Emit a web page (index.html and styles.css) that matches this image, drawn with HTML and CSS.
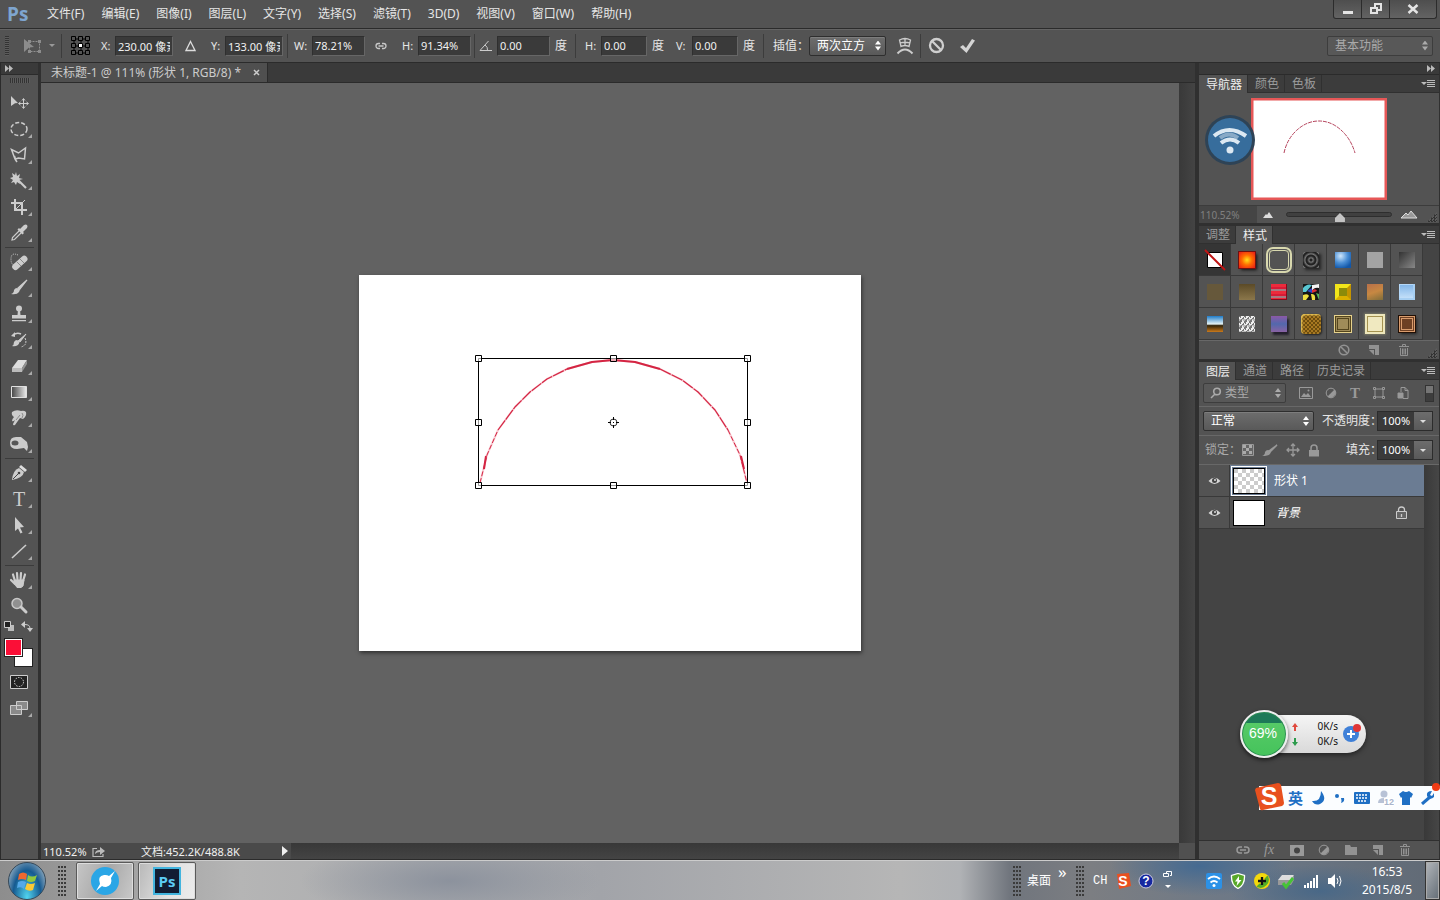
FILE: index.html
```html
<!DOCTYPE html>
<html lang="zh-CN">
<head>
    <meta charset="UTF-8">
    <meta name="viewport" content="width=device-width, initial-scale=1.0">
    <title>未标题-1 @ 111%</title>
    <link rel="stylesheet" href="styles.css">
</head>
<body>
    <!-- Menu bar -->
    <header class="menubar">
        <span class="ps-logo">Ps</span>
        <nav class="menus">
            <a href="#">文件(F)</a>
            <a href="#">编辑(E)</a>
            <a href="#">图像(I)</a>
            <a href="#">图层(L)</a>
            <a href="#">文字(Y)</a>
            <a href="#">选择(S)</a>
            <a href="#">滤镜(T)</a>
            <a href="#">3D(D)</a>
            <a href="#">视图(V)</a>
            <a href="#">窗口(W)</a>
            <a href="#">帮助(H)</a>
        </nav>
        <div class="window-buttons">
            <button type="button" aria-label="最小化"><svg width="12" height="12"><path d="M1 8h10v3H1z" fill="#e4e4e4"/></svg></button>
            <button type="button" aria-label="还原"><svg width="12" height="12" fill="none" stroke="#e4e4e4" stroke-width="2"><path d="M5 4V1h6v6H8"/><path d="M1 5h6v5H1z"/></svg></button>
            <button type="button" class="close" aria-label="关闭"><svg width="12" height="12"><path d="M1.500 2l9 8M10.500 2l-9 8" stroke="#e4e4e4" stroke-width="2.500"/></svg></button>
        </div>
    </header>

    <!-- Tool options -->
    <form class="options">
        <span class="grip"></span>
        <svg class="tool-now" width="18" height="16"><path d="M6.500 3.500h10v10h-10z" fill="none" stroke="#909090" stroke-dasharray="2 1"/><path d="M1 1l10 8-5 .5L1 14z" fill="#8c8c8c"/><path d="M5 2h3v3H5zM15 2h3v3h-3zM15 12h3v3h-3zM5 12h3v3H5z" fill="#8c8c8c"/></svg>
        <span class="caret"></span>
        <span class="sep"></span>
        <svg class="ref-point" width="20" height="20" fill="none" stroke="#000"><path d="M3 3h14v14H3zM3 10h14M10 3v14"/><g fill="#535353"><path d="M.5.5h4v4h-4zM7.500.5h4v4h-4zM14.500.5h4v4h-4zM.5 7.500h4v4h-4zM14.500 7.500h4v4h-4zM.5 14.500h4v4h-4zM7.500 14.500h4v4h-4zM14.500 14.500h4v4h-4z"/></g><path d="M7.500 7.500h4v4h-4z" fill="#fff"/></svg>
        <label class="l14" for="x">X:</label><input id="x" class="w58" type="text" value="230.00 像素">
        <svg class="delta" width="11" height="12"><path d="M5.500 1.500l4.500 9H1z" fill="none" stroke="#ddd" stroke-width="1.300"/></svg>
        <label class="l14" for="y">Y:</label><input id="y" class="w58" type="text" value="133.00 像素">
        <span class="sep near"></span>
        <label class="l18" for="w">W:</label><input id="w" class="w53" type="text" value="78.21%">
        <svg class="link-wh" width="12" height="8" fill="none" stroke="#c8c8c8" stroke-width="1.300"><path d="M5 1.500H3.500a2.500 2.500 0 0 0 0 5H5M7 1.500h1.500a2.500 2.500 0 0 1 0 5H7M3.500 4h5"/></svg>
        <label class="l16" for="h">H:</label><input id="h" class="w53" type="text" value="91.34%">
        <span class="sep tight"></span>
        <svg class="angle" width="13" height="12" fill="none" stroke="#ccc"><path d="M9.500 1L1 10.500h12M6 5q3 2 2.500 5.500"/></svg>
        <input class="w53" type="text" value="0.00" aria-label="旋转"><span class="unit">度</span>
        <span class="sep wide"></span>
        <label class="l16" for="sh">H:</label><input id="sh" class="w46" type="text" value="0.00"><span class="unit">度</span>
        <label class="l16 skew-v" for="sv">V:</label><input id="sv" class="w46" type="text" value="0.00"><span class="unit">度</span>
        <span class="sep wide"></span>
        <label class="l36" for="interp">插值：</label>
        <span class="select interp"><select id="interp"><option>两次立方</option></select></span>
        <button type="button" class="flat warp" aria-label="变形"><svg width="18" height="18" fill="none" stroke="#ccc" stroke-width="1.300"><path d="M3.500 3q5.500-3 11 0l-1.500 6.500q-4-2-8 0zM4 6q5-1.500 10 0M9 1.500v7.500"/><path d="M1.500 16.500q7.500-8 15 0" stroke-width="2"/></svg></button>
        <span class="sep"></span>
        <button type="button" class="flat cancel" aria-label="取消变换"><svg width="17" height="17" fill="none" stroke="#cfcfcf" stroke-width="2.300"><circle cx="8.500" cy="8.500" r="6.500"/><path d="M4 4l9 9"/></svg></button>
        <button type="button" class="flat commit" aria-label="提交变换"><svg width="17" height="16"><path d="M1 9l3-2 3 3 6-9 3 1.500L7.500 15z" fill="#d4d4d4"/></svg></button>
        <span class="select workspace-pick dim"><select aria-label="工作区"><option>基本功能</option></select></span>
    </form>

    <main class="workspace">
        <!-- Toolbox -->
        <aside class="toolbox">
            <div class="bar-head"><svg width="8" height="7" fill="#bbb"><path d="M0 0l4 3.500L0 7zM4 0l4 3.500L4 7z"/></svg></div>
            <div class="toolbox-grip"></div>
            <div class="tools">
                <button type="button" class="single" aria-label="移动"><svg viewBox="0 0 20 20"><path d="M2 3l7 7-3 .3L2 13z" fill="#ccc"/><path d="M14.500 6v9M10 10.500h9M13 7.500l1.500-2 1.500 2M13 13.500l1.500 2 1.500-2M11.500 9l-2 1.500 2 1.500M17.500 9l2 1.500-2 1.500" fill="none" stroke="#ccc"/></svg></button>
                <button type="button" aria-label="椭圆选框"><svg viewBox="0 0 20 20"><ellipse cx="10" cy="10" rx="8" ry="6.500" fill="none" stroke="#ccc" stroke-width="1.500" stroke-dasharray="4 2"/></svg></button>
                <button type="button" aria-label="套索"><svg viewBox="0 0 20 20" fill="none" stroke="#ccc" stroke-width="1.500"><path d="M6 14L2.500 4.500l7 3.500 7-5-1 11-6-1-3 1-1-3M6 14l2 3"/></svg></button>
                <button type="button" aria-label="魔棒"><svg viewBox="0 0 20 20"><path d="M7 1l1 4 3-2-1 4 4 1-4 1 1 4-3-2-1 3-2-3-3 1 2-3-3-2 3-1-1-4 3 2z" fill="#ccc"/><path d="M9 9l8 8" stroke="#ccc" stroke-width="2.200"/></svg></button>
                <button type="button" aria-label="裁剪"><svg viewBox="0 0 20 20" fill="none" stroke="#ccc" stroke-width="2"><path d="M6 2v11h12M2 6h11v12"/><path d="M7 12l9-9" stroke-width="1"/></svg></button>
                <button type="button" aria-label="吸管"><svg viewBox="0 0 20 20"><path d="M11 6l4-4q2-1 3 0t0 3l-4 4 1 1-1.500 1.500-5-5L10 5z" fill="#ccc"/><path d="M10.500 7.500l-7 7L3 17l2.500-.5 7-7" fill="none" stroke="#ccc" stroke-width="1.200"/></svg></button>
                <hr>
                <button type="button" aria-label="修复画笔"><svg viewBox="0 0 20 20"><rect x="2" y="7.500" width="18" height="6.500" rx="3" transform="rotate(-42 11 11)" fill="#ccc"/><path d="M8 10l4 4M11 7l4 4" stroke="#888"/><path d="M9 3q-7-3-7 4t4 5" fill="none" stroke="#ccc" stroke-dasharray="1 1"/></svg></button>
                <button type="button" aria-label="画笔"><svg viewBox="0 0 20 20"><path d="M18 2l-7.500 9.500L9 10z" stroke="#ccc" fill="#ccc" stroke-width="1.200"/><path d="M8 10q4 1 2 4-2 3-8 2 3-1 3-4 1-2 3-2z" fill="#ccc"/></svg></button>
                <button type="button" aria-label="图章"><svg viewBox="0 0 20 20" fill="#ccc"><circle cx="10" cy="4.500" r="3"/><path d="M9 6h2l.5 5H17v3.500H3V11h5.500zM3 16h14v1.300H3z"/></svg></button>
                <button type="button" aria-label="历史记录画笔"><svg viewBox="0 0 20 20"><path d="M17 4l-6 8-2-1z" fill="#ccc" stroke="#ccc"/><path d="M8 10q4 2 1 5-3 2-6 1 2-1 2-4 1-2 3-2z" fill="#ccc"/><path d="M4 5q4-3 8-1" fill="none" stroke="#ccc" stroke-width="1.500"/><path d="M2 6l4-4v5z" fill="#ccc"/><path d="M16 8q3 7-4 9" fill="none" stroke="#ccc" stroke-dasharray="2 1"/></svg></button>
                <button type="button" aria-label="橡皮擦"><svg viewBox="0 0 20 20"><path d="M9 4h9l-5 8H3z" fill="#ddd"/><path d="M3 12h10v4H3z" fill="#bbb"/><path d="M18 4v4l-5 8v-4z" fill="#929292"/></svg></button>
                <button type="button" aria-label="渐变"><svg viewBox="0 0 20 20"><defs><linearGradient id="g1"><stop stop-color="#444"/><stop offset="1" stop-color="#eee"/></linearGradient></defs><path d="M2.500 4.500h15v11h-15z" fill="url(#g1)" stroke="#e0e0e0"/></svg></button>
                <button type="button" aria-label="涂抹"><svg viewBox="0 0 20 20"><path d="M3 4q4-3 9-1 3-1 5 1 1 4-3 7l-3-1-5 7q-2 1-2-1l2-4q-2 2-3 1 0-2 2-4-3-2-2-5z" fill="#ccc"/><path d="M7 12l4-5M13 5q2 2 0 5" fill="none" stroke="#8a8a8a"/></svg></button>
                <button type="button" aria-label="海绵"><svg viewBox="0 0 20 20"><path d="M1 9q0-6 6-6h5l6 5 1 5-1 4-3-3-7 1q-7 0-7-6z" fill="#ccc"/><ellipse cx="6" cy="9" rx="3.500" ry="2.500" fill="#575757"/></svg></button>
                <hr>
                <button type="button" aria-label="钢笔"><svg viewBox="0 0 20 20"><path d="M12 2l6 5-2 2-6-5z" fill="#ddd"/><path d="M10 5l5 4q-1 6-12 8Q4 7 10 5z" fill="#ccc"/><path d="M4 16l6-6" stroke="#444"/><circle cx="10" cy="10" r="1.300" fill="#444"/></svg></button>
                <button type="button" aria-label="文字"><span class="t-icon">T</span></button>
                <button type="button" aria-label="路径选择"><svg viewBox="0 0 20 20"><path d="M6 2l9 10-4 .5 2.500 5-2 1L9 13.500 6 16z" fill="#ccc"/></svg></button>
                <button type="button" aria-label="直线"><svg viewBox="0 0 20 20"><path d="M3 17L17 4" stroke="#ccc" stroke-width="1.600"/></svg></button>
                <hr>
                <button type="button" aria-label="抓手"><svg viewBox="0 0 20 20" fill="none" stroke="#ccc" stroke-width="2.200" stroke-linecap="round"><path d="M6 11L4 4.500M8.500 10L8 3M11.500 10l.5-7M14 11l2-6.500M6 14l-4-4"/><path d="M5.500 10H15l-1 6-2 1.500H8L5 13z" fill="#ccc" stroke-width="1"/></svg></button>
                <button type="button" class="single" aria-label="缩放"><svg viewBox="0 0 20 20"><circle cx="8" cy="7.500" r="5" fill="#909090" stroke="#c8c8c8" stroke-width="1.500"/><path d="M12 11l5 5" stroke="#ccc" stroke-width="3" stroke-linecap="round"/></svg></button>
            </div>
            <div class="mini-swatch">
                <svg width="11" height="11"><path d="M4 4h6v6H4z" fill="#bbb"/><path d="M.5.500h6v6h-6z" fill="#222" stroke="#ccc"/></svg>
                <svg width="12" height="12" fill="#ccc"><path d="M4 0v7L0 3.500z"/><path d="M4 3.500q5 0 5 4" fill="none" stroke="#ccc"/><path d="M6 7h6l-3 4z"/></svg>
            </div>
            <div class="colors"><span class="bg-color"></span><span class="fg-color"></span></div>
            <button type="button" class="mode" aria-label="快速蒙版"><svg width="18" height="14"><path d="M.5.500h17v13H.5z" fill="#222" stroke="#ccc"/><circle cx="9" cy="7" r="4.500" fill="none" stroke="#ddd" stroke-dasharray="1.500 1.300"/></svg></button>
            <button type="button" class="mode screen" aria-label="屏幕模式"><svg width="18" height="14" fill="#8a8a8a" stroke="#ccc"><path d="M.5 4.500h11v9H.5zM6.500.500h11v8h-11z"/></svg></button>
        </aside>

        <!-- Document -->
        <section class="document">
            <div class="doc-tabs"><div class="doc-tab">未标题-1 @ 111% (形状 1, RGB/8) *<button type="button" aria-label="关闭文档"><svg width="8" height="8"><path d="M1 1l5 5M6 1L1 6" stroke="#ccc" stroke-width="1.500"/></svg></button></div></div>
            <div class="stage-row">
                <div class="stage">
                    <svg class="artboard" width="502" height="376" viewBox="0 0 502 376">
                        <g fill="none" stroke="#d42543" stroke-linejoin="round">
                            <path d="M121 208L128 180L139 155L156 132L171 117L188 104L208 94L233 87L254 85L276 87L301 94L323 105L339 117L356 135L369 155L381 180L388 208" stroke="#f4a0ae" stroke-width="2" stroke-opacity=".5"/>
                            <path d="M121 208L128 180L139 155M369 155L381 180L388 208" stroke-width="1" stroke-dasharray="5 2"/>
                            <path d="M139 155L156 132L171 117L188 104L208 94M301 94L323 105L339 117L356 135L369 155" stroke-width="1.200" stroke-dasharray="12 1"/>
                            <path d="M208 94L233 87L254 85L276 87L301 94" stroke-width="2"/>
                            <path d="M127 181L125 194M382 181L385 194" stroke-width="2"/>
                        </g>
                        <path d="M119.500 83.500h269v127h-269z" fill="none" stroke="#000"/>
                        <g fill="#fff" fill-opacity=".6" stroke="#000">
                            <path d="M116.500 80.500h6v6h-6zM251.500 80.500h6v6h-6zM385.500 80.500h6v6h-6zM116.500 144.500h6v6h-6zM385.500 144.500h6v6h-6zM116.500 207.500h6v6h-6zM251.500 207.500h6v6h-6zM385.500 207.500h6v6h-6z"/>
                        </g>
                        <circle cx="254.500" cy="147.500" r="3.500" fill="none" stroke="#333"/>
                        <path d="M254.500 142v3M254.500 150v3M249 147.500h3M257 147.500h3M254 147.500h1" stroke="#000"/>
                    </svg>
                </div>
                <div class="v-scroll"></div>
            </div>
            <footer class="status">
                <div class="status-main">
                    <span class="zoom">110.52%</span>
                    <svg width="13" height="11" fill="none" stroke="#bbb" stroke-width="1.200"><path d="M5 2.500H1v8h10V8"/><path d="M3 8q0-4 5-4V1l5 4-5 4V6Q5 6 3 8" fill="#bbb" stroke="none"/></svg>
                    <span class="doc-size">文档:452.2K/488.8K</span>
                    <span class="play"></span>
                </div>
                <div class="corner"></div>
            </footer>
        </section>

        <!-- Panels -->
        <aside class="dock">
            <div class="bar-head right"><svg width="8" height="7" fill="#bbb"><path d="M0 0l4 3.500L0 7zM4 0l4 3.500L4 7z"/></svg></div>
            <section class="panel">
                <div class="tabs"><button type="button" class="on">导航器</button><button type="button">颜色</button><button type="button">色板</button><i class="panel-menu"></i></div>
                <div class="nav-body">
                    <svg class="nav-thumb" width="136" height="102"><path d="M1 1h134v100H1z" fill="#fff" stroke="#e65757" stroke-width="3"/><path d="M33 55q3-14 13-23t22-9 22 9 14 23" fill="none" stroke="#b5435c" stroke-dasharray="4 1"/></svg>
                    <div class="wifi-badge"><svg width="36" height="30" fill="none" stroke="#dce8f2" stroke-width="4"><path d="M2 11q15-12 32 0M9 18q9-7 18 0"/><path d="M8 13q9-7 18 0" stroke-opacity=".5"/><circle cx="18" cy="25" r="3.500" fill="#dce8f2" stroke="none"/></svg></div>
                </div>
                <div class="nav-foot">
                    <input class="nav-zoom" type="text" value="110.52%" aria-label="缩放比例">
                    <svg width="10" height="6"><path d="M0 6l3-4 1 1 2-3 4 6z" fill="#ddd"/></svg>
                    <input class="nav-range" type="range" min="0" max="100" value="51" aria-label="缩放">
                    <svg width="18" height="9"><path d="M1 8l5-5 2 2 3-4 6 7z" fill="#999" stroke="#ddd"/></svg>
                    <i class="sizer"></i>
                </div>
            </section>

            <section class="panel">
                <div class="tabs"><button type="button">调整</button><button type="button" class="on">样式</button><i class="panel-menu"></i></div>
                <div class="styles-grid">
                    <button type="button" class="picked" aria-label="无样式"><svg width="22" height="22"><path d="M3.500 3.500h15v15h-15z" fill="#fff" stroke="#000"/><path d="M1 1l20 20" stroke="#c01414" stroke-width="2"/></svg></button>
                    <button type="button" aria-label="样式 2"><i class="sw sun"></i></button>
                    <button type="button" aria-label="样式 3"><i class="sw ring"></i></button>
                    <button type="button" aria-label="样式 4"><i class="sw target"></i></button>
                    <button type="button" aria-label="样式 5"><i class="sw blue-glass"></i></button>
                    <button type="button" aria-label="样式 6"><i class="sw grey"></i></button>
                    <button type="button" aria-label="样式 7"><i class="sw smoke"></i></button>
                    <button type="button" aria-label="样式 8"><i class="sw brown"></i></button>
                    <button type="button" aria-label="样式 9"><i class="sw olive"></i></button>
                    <button type="button" aria-label="样式 10"><i class="sw plaid"></i></button>
                    <button type="button" aria-label="样式 11"><svg width="16" height="16"><path d="M0 0h16v16H0z" fill="#151515"/><path d="M0 4q4-5 9-3L3 8H0z" fill="#58c7d3"/><path d="M9 1l7-1v4q-5-1-7 3z" fill="#f4f4f4"/><path d="M4 7l5-3v5z" fill="#2e48c8"/><path d="M9 6q4-2 5 1l-5 2z" fill="#df3039"/><path d="M0 16v-5q5-2 6 1l-3 4zM8 10q5-1 4 6H9z" fill="#f0e040"/><path d="M13 9l3 1v6z" fill="#59b45a"/></svg></button>
                    <button type="button" aria-label="样式 12"><i class="sw yellow"></i></button>
                    <button type="button" aria-label="样式 13"><i class="sw sunset"></i></button>
                    <button type="button" aria-label="样式 14"><i class="sw ice"></i></button>
                    <button type="button" aria-label="样式 15"><i class="sw desert"></i></button>
                    <button type="button" aria-label="样式 16"><i class="sw noise"></i></button>
                    <button type="button" aria-label="样式 17"><i class="sw violet"></i></button>
                    <button type="button" aria-label="样式 18"><i class="sw gold"></i></button>
                    <button type="button" aria-label="样式 19"><i class="sw frame"></i></button>
                    <button type="button" aria-label="样式 20"><i class="sw cream"></i></button>
                    <button type="button" aria-label="样式 21"><i class="sw copper"></i></button>
                </div>
                <div class="styles-foot">
                    <svg width="12" height="12" fill="none" stroke="#929292" stroke-width="1.600"><circle cx="6" cy="6" r="4.800"/><path d="M3 3l6 6"/></svg>
                    <svg width="12" height="12" fill="#929292"><path d="M1 1h10v10H7V5H1z"/><path d="M1 6h5v5z"/></svg>
                    <svg width="12" height="12" fill="none" stroke="#929292"><path d="M1 2.500h10M4.500 2V.5h3V2M2.500 4v7.500h7V4M4.500 4.500v6M6 4.500v6M7.500 4.500v6"/></svg>
                    <i class="sizer"></i>
                </div>
            </section>

            <section class="panel layers">
                <div class="tabs"><button type="button" class="on">图层</button><button type="button">通道</button><button type="button">路径</button><button type="button">历史记录</button><i class="panel-menu"></i></div>
                <div class="filter-row">
                    <span class="select filter dim"><svg width="12" height="12" fill="none" stroke="#aaa" stroke-width="1.600"><circle cx="7" cy="4.500" r="3.300"/><path d="M5 7l-4 4"/></svg><select aria-label="筛选"><option>类型</option></select></span>
                    <svg class="first" width="14" height="12"><path d="M.5.500h13v11H.5z" fill="none" stroke="#999"/><path d="M2 10l3-4 2 2 2-2 3 4z" fill="#999"/><circle cx="9.500" cy="3.500" r="1" fill="#999"/></svg>
                    <svg width="12" height="12"><circle cx="6" cy="6" r="4.800" fill="none" stroke="#999"/><path d="M9.500 2.500a5 5 0 0 1-7 7z" fill="#999"/></svg>
                    <span class="t-filter">T</span>
                    <svg width="12" height="12" fill="none" stroke="#999"><path d="M2 2h8v8H2z"/><path d="M.5.500h2v2h-2zM9.500.500h2v2h-2zM.5 9.500h2v2h-2zM9.500 9.500h2v2h-2z"/></svg>
                    <svg width="12" height="12" fill="none" stroke="#999"><path d="M4 5V.5h4l3 3v8H6"/><path d="M8 .5v3h3"/><path d="M1 6h5v5H1z" fill="#999"/></svg>
                    <i class="switch"></i>
                </div>
                <div class="field-row">
                    <span class="select blend"><select aria-label="混合模式"><option>正常</option></select></span>
                    <label class="push" for="opacity">不透明度：</label>
                    <span class="combo"><input id="opacity" type="text" value="100%"><button type="button" aria-label="调整不透明度"></button></span>
                </div>
                <div class="field-row">
                    <span class="lock-label">锁定：</span>
                    <span class="locks">
                        <svg width="12" height="12"><path d="M.5.500h11v11H.5z" fill="#666" stroke="#999"/><path d="M1 1h3v3H1zM7 1h3v3H7zM4 4h3v3H4zM1 7h3v3H1zM7 7h3v3H7z" fill="#aaa"/></svg>
                        <svg width="16" height="13"><path d="M15 1L8 8 7 7z" stroke="#999" stroke-width="1.500"/><path d="M6 6q4 1 2 4-2 2-8 2 3-1 3-4 1-2 3-2z" fill="#999"/></svg>
                        <svg width="14" height="14" fill="none" stroke="#999" stroke-width="1.300"><path d="M7 1v12M1 7h12M5 3l2-2 2 2M5 11l2 2 2-2M3 5L1 7l2 2M11 5l2 2-2 2"/></svg>
                        <svg width="12" height="13"><path d="M1 6h10v6.500H1z" fill="#999"/><path d="M3 6V4q0-3 3-3t3 3v2" fill="none" stroke="#999" stroke-width="1.500"/></svg>
                    </span>
                    <label class="push" for="fill">填充：</label>
                    <span class="combo"><input id="fill" type="text" value="100%"><button type="button" aria-label="调整填充"></button></span>
                </div>
                <div class="layer-list">
                    <div class="layer active">
                        <span class="eye"><svg width="13" height="10"><path d="M.5 5q6-6.500 12 0-6 6-12 0z" fill="#d6d6d6"/><circle cx="6.500" cy="4.500" r="2.500" fill="#444"/><circle cx="7" cy="4" r="1" fill="#ddd"/></svg></span>
                        <span class="thumb checker"></span>
                        <span class="name">形状 1</span>
                    </div>
                    <div class="layer">
                        <span class="eye"><svg width="13" height="10"><path d="M.5 5q6-6.500 12 0-6 6-12 0z" fill="#d6d6d6"/><circle cx="6.500" cy="4.500" r="2.500" fill="#444"/><circle cx="7" cy="4" r="1" fill="#ddd"/></svg></span>
                        <span class="thumb"></span>
                        <span class="name italic">背景</span>
                        <svg class="locked" width="11" height="13"><path d="M.5 5.500h10v7H.5z" fill="#666" stroke="#ccc"/><path d="M2.500 5V4q0-3 3-3t3 3v1M5.500 8v3" fill="none" stroke="#ccc" stroke-width="1.300"/></svg>
                    </div>
                </div>
                <div class="layers-foot">
                    <svg class="wide" width="14" height="8" fill="none" stroke="#999" stroke-width="1.500"><path d="M6 1H4a3 3 0 0 0 0 6h2M8 1h2a3 3 0 0 1 0 6H8M4 4h6"/></svg>
                    <span class="fx">fx</span>
                    <svg class="wide" width="14" height="11"><path d="M0 0h14v11H0z" fill="#999"/><circle cx="7" cy="5.500" r="3" fill="#444"/></svg>
                    <svg width="12" height="12"><circle cx="6" cy="6" r="4.800" fill="none" stroke="#999"/><path d="M9.500 2.500a5 5 0 0 1-7 7z" fill="#999"/></svg>
                    <svg width="12" height="10" fill="#929292"><path d="M0 0h5l1 2h6v8H0z"/></svg>
                    <svg width="12" height="12" fill="#929292"><path d="M1 1h10v10H7V5H1z"/><path d="M1 6h5v5z"/></svg>
                    <svg width="12" height="12" fill="none" stroke="#929292"><path d="M1 2.500h10M4.500 2V.5h3V2M2.500 4v7.500h7V4M4.500 4.500v6M6 4.500v6M7.500 4.500v6"/></svg>
                </div>
            </section>
        </aside>
    </main>

    <!-- Taskbar -->
    <footer class="taskbar">
        <button type="button" class="orb" aria-label="开始"><svg width="24" height="24"><path d="M4 5q4-3 8 0l-1 6q-4-2-8 0z" fill="#ee6830"/><path d="M13 6q4 3 9 0l-2 6q-4 2-8 0z" fill="#90c83e"/><path d="M3 13q4-2 8 0l-2 7q-3-3-7-1z" fill="#55a9e8"/><path d="M12 14q4 2 8 0l-2 7q-4 2-8-1z" fill="#fbc935"/></svg></button>
        <span class="dots"></span>
        <button type="button" class="task" aria-label="浏览器"><svg width="28" height="28"><circle cx="14" cy="14" r="14" fill="#2aa6e6"/><path d="M24 4l-4 7q2 7-5 9-3 0-4-1l-6 5 4-7Q6 9 13 8q3-.5 5 1z" fill="#fff"/></svg></button>
        <button type="button" class="task active"><span class="ps-tile">Ps</span></button>

        <div class="tray">
            <span class="dots"></span>
            <span class="desk">桌面</span>
            <span class="more">»</span>
            <span class="dots"></span>
            <span class="lang">CH</span>
            <svg class="sogou-mini" width="16" height="16"><path d="M2 1l12-1 2 13-12 3z" fill="#e9501f"/><text x="8" y="13" text-anchor="middle" font-family="Liberation Sans" font-size="14" font-weight="bold" fill="#fff">S</text></svg>
            <svg class="help" width="16" height="16"><circle cx="8" cy="8" r="7" fill="#1628a0" stroke="#ccd"/><text x="8" y="12" text-anchor="middle" font-family="Liberation Sans" font-size="12" font-weight="bold" fill="#fff">?</text></svg>
            <svg class="ime" width="10" height="22"><path d="M3.500 3V1.500h5v4H7M.5 3.500h5v3h-5z" fill="none" stroke="#fff"/><path d="M2 15h6l-3 3z" fill="#fff"/></svg>
            <div class="tray-icons">
                <svg width="16" height="16"><rect width="16" height="16" rx="2" fill="#2c91e6"/><path d="M2 6q6-5 12 0M4.500 9.500q3.500-3 7 0" fill="none" stroke="#fff" stroke-width="1.800"/><circle cx="8" cy="12.500" r="1.500" fill="#fff"/></svg>
                <svg width="16" height="16"><path d="M8 .5l6.500 2Q15 12 8 15.500 1 12 1.500 2.500z" fill="#57a829" stroke="#fff" stroke-width="1.300"/><path d="M9 3L5 8.500h2.500L6.500 13l5-6H9z" fill="#fff"/></svg>
                <svg width="16" height="16"><circle cx="8" cy="8" r="8" fill="#f4d80c"/><path d="M13.500 2.500a8 8 0 0 1-11 11l3-3a4 4 0 0 0 5-5z" fill="#53ad28"/><path d="M8 4v8M4 8h8" stroke="#111" stroke-width="2.300"/></svg>
                <svg width="17" height="16"><path d="M4 2h12l-3 5H0z" fill="#ddd"/><path d="M0 7h13l3-5v5l-3 5H0z" fill="#999"/><path d="M5 10l3 4 7-9" fill="none" stroke="#46c336" stroke-width="3"/></svg>
                <svg width="16" height="14" fill="#fff"><path d="M1 11h2v3H1zM4 9h2v5H4zM7 7h2v7H7zM10 4h2v10h-2zM13 1h2v13h-2z"/></svg>
                <svg width="16" height="14"><path d="M1 4h3l4-4v14l-4-4H1z" fill="#fff"/><path d="M10 4q2 3 0 6M12.500 2q3 5 0 10" fill="none" stroke="#fff"/></svg>
            </div>
            <div class="clock"><span>16:53</span><span>2015/8/5</span></div>
            <button type="button" class="show-desktop" aria-label="显示桌面"></button>
        </div>
    </footer>

    <!-- Floating widgets -->
    <div class="speed">
        <div class="ball">69%</div>
        <div class="rates">
            <span><svg width="6" height="8"><path d="M3 0l3 4H4v4H2V4H0z" fill="#e04a3e"/></svg>0K/s</span>
            <span><svg width="6" height="8"><path d="M3 8l3-4H4V0H2v4H0z" fill="#2c9b4c"/></svg>0K/s</span>
        </div>
        <button type="button" class="boost" aria-label="加速"><svg width="20" height="22"><circle cx="9" cy="13" r="8" fill="#3f80d8"/><path d="M9 9v8M5 13h8" stroke="#fff" stroke-width="2"/><circle cx="15" cy="7" r="4" fill="#e03636"/></svg></button>
    </div>

    <div class="ime-bar">
        <svg class="sogou" width="29" height="28"><path d="M1 5L23 0q2 0 3 2l3 18q0 2-2 3L8 27q-2 1-3-1L0 7z" fill="#e8501e"/><text x="14" y="22" text-anchor="middle" font-family="Liberation Sans" font-size="25" font-weight="bold" fill="#fff">S</text></svg>
        <span class="ying">英</span>
        <svg width="14" height="14"><path d="M9 0q7 9-1 13-5 2-8-3 9 1 9-10z" fill="#1f6fc4"/></svg>
        <svg width="12" height="12" fill="#1f6fc4"><circle cx="3" cy="4" r="2"/><path d="M7 6h3q1 4-3 5 1-2 0-5z"/></svg>
        <svg width="16" height="12"><rect width="16" height="12" rx="1" fill="#1f6fc4"/><path d="M2 3h12M2 6h12M4 9h8" stroke="#fff" stroke-width="1.500" stroke-dasharray="2 1"/></svg>
        <svg class="user" width="16" height="16"><circle cx="6" cy="4" r="3.500" fill="#b8c2d6"/><path d="M0 13q0-5 6-5t6 5z" fill="#b8c2d6"/><path d="M6 8h10v8H6z" fill="#fff"/><text x="6" y="15" font-family="Liberation Sans" font-size="9" font-weight="bold" fill="#a9b5cc">12</text></svg>
        <svg width="14" height="14"><path d="M4 0q3 2 6 0l4 3-2 4-1-1v8H3V6L2 7 0 3z" fill="#1f6fc4"/></svg>
        <svg width="14" height="14"><path d="M1 13l8-7" stroke="#1f6fc4" stroke-width="3"/><path d="M13 2l-2 3-2-1 2-4q-6 0-5 5 3 5 7 1z" fill="#1f6fc4"/></svg>
        <i class="alert"></i>
    </div>
</body>
</html>
```
FILE: styles.css
```css
* {
    box-sizing: border-box;
}
body {
    margin: 0;
    height: 100vh;
    display: flex;
    flex-direction: column;
    position: relative;
    overflow: hidden;
    background: #535353;
    color: #e6e6e6;
    font: 12px/16px "Noto Sans", "Noto Sans CJK SC", sans-serif;
}
button, input, select {
    font: inherit;
    color: inherit;
    margin: 0;
    padding: 0;
    border: 0;
    background: none;
}
svg {
    display: block;
    flex: none;
}
label, span {
    white-space: nowrap;
}

/* Menu bar */
.menubar {
    display: flex;
    height: 28px;
    flex: none;
    align-items: center;
    padding-left: 7px;
}
.ps-logo {
    width: 40px;
    color: #7ea5cf;
    font: bold 19px/26px "Open Sans", sans-serif;
}
.menus {
    display: flex;
    gap: 17px;
}
.menus a {
    color: #e6e6e6;
    text-decoration: none;
}
.window-buttons {
    display: flex;
    align-self: flex-start;
    margin-left: auto;
    margin-right: 3px;
    height: 19px;
    border: 1px solid #2c2c2c;
    border-top: 0;
    border-radius: 0 0 3px 3px;
    background: linear-gradient(#4e4e4e, #636363);
}
.window-buttons button {
    width: 28px;
    display: grid;
    place-items: center;
    border-right: 1px solid #2c2c2c;
}
.window-buttons .close {
    width: 46px;
    border: 0;
}

/* Tool options */
.options {
    display: flex;
    align-items: center;
    flex: none;
    height: 34px;
    padding: 0 7px 0 5px;
    border-top: 1px solid #2b2b2b;
    box-shadow: inset 0 1px #646464;
    font-size: 11px;
}
.options label {
    flex: none;
}
.options input {
    flex: none;
    height: 20px;
    padding: 0 2px;
    background: #3a3a3a;
    border: 1px solid #2f2f2f;
    border-bottom-color: #666;
    border-right-color: #666;
    color: #f0f0f0;
}
.grip {
    width: 4px;
    height: 20px;
    background: repeating-linear-gradient(#333 0 1px, #5c5c5c 1px 2px);
}
.sep {
    width: 1px;
    height: 24px;
    margin: 0 7px 0 6px;
    background: #3c3c3c;
}
.sep.near {
    margin: 0 6px 0 4px;
}
.sep.tight {
    margin: 0 4px 0 3px;
}
.sep.wide {
    margin: 0 9px 0 8px;
}
.tool-now {
    margin-left: 14px;
}
.caret {
    margin-left: 8px;
    border: 3px solid transparent;
    border-top-color: #999;
    border-bottom: 0;
}
.ref-point {
    margin: 0 10px 0 2px;
}
.l14 { width: 14px; }
.l16 { width: 16px; }
.l18 { width: 18px; }
.l36 { width: 36px; font-size: 12px; }
.w46 { width: 46px; }
.w53 { width: 53px; }
.w58 { width: 58px; }
.delta {
    margin: 0 15px 0 12px;
}
.link-wh {
    margin: 0 15px 0 10px;
}
.angle {
    margin-right: 5px;
}
.unit {
    width: 12px;
    margin-left: 5px;
    font-size: 12px;
}
.skew-v {
    margin-left: 12px;
}
.warp {
    margin-left: 10px;
}
.commit {
    margin-left: 14px;
}
.select {
    display: flex;
    align-items: center;
    position: relative;
    height: 20px;
    border: 1px solid #2e2e2e;
    border-radius: 2px;
    background: linear-gradient(#6d6d6d, #595959);
    box-shadow: inset 0 1px #7d7d7d;
    color: #fff;
    font-size: 12px;
}
.select::after {
    content: "";
    position: absolute;
    right: 4px;
    top: 4px;
    width: 6px;
    height: 10px;
    background: currentColor;
    clip-path: polygon(0 4px, 3px 0, 6px 4px, 0 4px, 0 6px, 6px 6px, 3px 10px, 0 6px);
}
.select select {
    appearance: none;
    flex: 1;
    min-width: 0;
    height: 18px;
    padding-left: 7px;
}
.select.dim {
    color: #aaa;
    border-color: #3d3d3d;
    background: #585858;
    box-shadow: none;
}
.interp {
    width: 77px;
}
.workspace-pick {
    width: 106px;
    margin-left: auto;
}

/* Work area */
.workspace {
    flex: 1;
    min-height: 0;
    display: flex;
    border-top: 1px solid #2b2b2b;
    border-bottom: 1px solid #2b2b2b;
}
.bar-head {
    height: 12px;
    padding: 2px 4px;
    background: #3a3a3a;
    border-bottom: 1px solid #2b2b2b;
}
.bar-head.right {
    display: flex;
    justify-content: flex-end;
}
.toolbox {
    flex: none;
    width: 41px;
    border-left: 1px solid #2b2b2b;
    border-right: 3px solid #303030;
}
.toolbox-grip {
    width: 20px;
    height: 5px;
    margin: 3px 9px 7px;
    background: repeating-linear-gradient(90deg, #333 0 1px, #5c5c5c 1px 2px);
}
.tools button {
    position: relative;
    display: grid;
    place-items: center;
    width: 36px;
    height: 26px;
}
.tools button::after,
.mode.screen::after {
    content: "";
    position: absolute;
    right: 5px;
    bottom: 4px;
    border: 2px solid transparent;
    border-right-color: #aaa;
    border-bottom-color: #aaa;
}
.tools .single::after {
    display: none;
}
.tools svg {
    width: 20px;
    height: 20px;
}
.tools hr {
    height: 1px;
    margin: 1px 4px;
    border: 0;
    background: #3b3b3b;
}
.t-icon {
    color: #ccc;
    font: 20px/24px "Liberation Serif", serif;
}
.mini-swatch {
    display: flex;
    justify-content: space-between;
    padding: 2px 5px 0 3px;
}
.colors {
    position: relative;
    height: 30px;
    margin: 5px 3px 1px;
}
.fg-color, .bg-color {
    position: absolute;
    width: 19px;
    height: 19px;
    border: 1px solid #222;
    background: #fff;
}
.fg-color {
    left: 0;
    top: 0;
    background: #fb0f37;
    box-shadow: inset 0 0 0 1px #fff;
}
.bg-color {
    left: 10px;
    top: 10px;
}
.mode {
    position: relative;
    display: grid;
    place-items: center;
    width: 36px;
    height: 26px;
}

/* Document */
.document {
    flex: 1;
    min-width: 0;
    display: flex;
    flex-direction: column;
}
.doc-tabs {
    height: 20px;
    background: #3a3a3a;
    border-bottom: 1px solid #2b2b2b;
}
.doc-tab {
    display: inline-flex;
    align-items: center;
    gap: 12px;
    height: 19px;
    padding: 0 6px 0 10px;
    background: #4f4f4f;
    border-right: 1px solid #2b2b2b;
    color: #ccc;
    white-space: nowrap;
}
.stage-row {
    flex: 1;
    min-height: 0;
    display: flex;
}
.stage {
    flex: 1;
    display: grid;
    place-items: center;
    background: #626262;
}
.artboard {
    background: #fff;
    box-shadow: 1px 2px 4px rgba(0, 0, 0, 0.5);
}
.v-scroll {
    width: 16px;
    background: linear-gradient(90deg, #393939, #444);
}
.status {
    display: flex;
    height: 16px;
    background: linear-gradient(#383838, #444);
    font-size: 11px;
    line-height: 15px;
}
.status-main {
    display: flex;
    align-items: center;
    width: 250px;
    padding-left: 2px;
    background: #4a4a4a;
    color: #f0f0f0;
}
.zoom {
    width: 49px;
}
.doc-size {
    margin-left: 36px;
}
.play {
    margin-left: auto;
    margin-right: 3px;
    border: 5px solid transparent;
    border-left: 6px solid #eee;
    border-right: 0;
}
.corner {
    width: 16px;
    margin-left: auto;
    background: #505050;
}

/* Panels */
.dock {
    flex: none;
    width: 245px;
    display: flex;
    flex-direction: column;
    border-left: 4px solid #303030;
    border-right: 1px solid #303030;
}
.panel {
    border-bottom: 3px solid #303030;
}
.tabs {
    display: flex;
    height: 18px;
    background: #3c3c3c;
    border-bottom: 1px solid #303030;
}
.tabs button {
    height: 17px;
    padding: 0 5px 0 7px;
    color: #9b9b9b;
    border-right: 1px solid #303030;
    font-size: 12px;
    line-height: 17px;
}
.tabs button.on {
    height: 18px;
    background: #535353;
    color: #eee;
}
.panel-menu {
    position: relative;
    width: 8px;
    height: 8px;
    margin: 5px 4px 0 auto;
    background: repeating-linear-gradient(#bbb 0 1px, transparent 1px 2px);
}
.panel-menu::before {
    content: "";
    position: absolute;
    left: -6px;
    top: 2px;
    border: 3px solid transparent;
    border-top-color: #bbb;
    border-bottom: 0;
}
.nav-body {
    position: relative;
    height: 112px;
    padding-top: 5px;
}
.nav-thumb {
    margin: 0 auto;
}
.wifi-badge {
    position: absolute;
    left: 6px;
    top: 22px;
    width: 50px;
    height: 50px;
    display: grid;
    place-items: center;
    border-radius: 50%;
    background: #376d9c;
    border: 3px solid rgba(40, 40, 40, 0.6);
}
.nav-foot {
    display: flex;
    align-items: center;
    height: 18px;
    border-top: 1px solid #3c3c3c;
}
.nav-zoom {
    width: 58px;
    height: 17px;
    padding-left: 1px;
    background: #454545;
    color: #808080;
    font-size: 10px;
}
.nav-foot svg:first-of-type {
    margin: 0 13px 0 6px;
}
.nav-range {
    appearance: none;
    width: 106px;
    margin-right: 8px;
    height: 14px;
}
.nav-range::-webkit-slider-runnable-track {
    height: 5px;
    border-radius: 3px;
    background: #404040;
    border: 1px solid #2e2e2e;
}
.nav-range::-webkit-slider-thumb {
    appearance: none;
    width: 10px;
    height: 9px;
    margin-top: 0;
    background: #c4c4c4;
    clip-path: polygon(50% 0, 100% 55%, 100% 100%, 0 100%, 0 55%);
}
.sizer {
    align-self: flex-end;
    width: 10px;
    height: 10px;
    margin: 0 2px 1px auto;
    background: repeating-conic-gradient(#333 0 25%, #5d5d5d 0 50%) 0 0 / 3px 3px;
    clip-path: polygon(100% 0, 100% 100%, 0 100%);
}
.styles-grid {
    display: grid;
    grid-template-columns: repeat(7, 32px);
    grid-auto-rows: 32px;
    background: #444;
}
.styles-grid button {
    display: grid;
    place-items: center;
    background: #535353;
    border-right: 1px solid #393939;
    border-bottom: 1px solid #393939;
}
.styles-grid .picked {
    background: #353535;
}
.sw {
    width: 16px;
    height: 16px;
}
.sun {
    background: radial-gradient(#ffe119, #ff6b00 45%, #e71818);
    box-shadow: 0 0 0 1px #701010, 2px 2px 3px #111;
}
.ring {
    width: 20px;
    height: 20px;
    border-radius: 4px;
    border: 1px solid #d8d8ae;
    box-shadow: 0 0 0 1px #555, 0 0 0 3px #d8d8ae;
}
.target {
    background: repeating-radial-gradient(#222 0 1px, #777 2px, #222 4px);
    box-shadow: 2px 2px 3px #222;
}
.blue-glass {
    background: radial-gradient(circle at 35% 25%, #cfe6fa, #4a8ed4 45%, #1257a8 80%);
}
.grey {
    background: #a3a3a3;
}
.smoke {
    background: linear-gradient(135deg, #333, #666 60%, #888);
}
.brown {
    background: #66583b;
}
.olive {
    background: linear-gradient(#5b4a27, #8b774b);
}
.plaid {
    background: repeating-linear-gradient(#ec2b3c 0 3px, #d81b36 3px 5px, #a87980 5px 7px);
    box-shadow: inset -1px -1px #840b1b;
}
.yellow {
    background: #8c8b0a;
    border: 4px solid #f2e51a;
    border-right-color: #c49400;
    border-bottom-color: #dbb000;
}
.sunset {
    background: linear-gradient(160deg, #b8704a, #c78842 50%, #7f6d3a);
}
.ice {
    background: linear-gradient(#7fb4e8, #cce5fb);
    box-shadow: inset -2px -2px #a7cff2, inset 1px 1px #b5d8f8;
}
.desert {
    background: linear-gradient(#1e7bc8, #e5f3f5 50%, #322409 60%, #cb7a1b);
}
.noise {
    background: repeating-conic-gradient(#eee 0 12%, #777 0 25%, #bbb 0 37%) 0 0 / 5px 6px;
}
.violet {
    background: linear-gradient(#8b59a7, #5268ac 50%, #8962a3);
    box-shadow: 2px 3px 2px #24202d;
}
.gold {
    width: 20px;
    height: 20px;
    border-radius: 4px;
    background: repeating-conic-gradient(#a87922 0 25%, #6d4c0e 0 50%) 0 0 / 4px 4px;
    box-shadow: inset 1px 1px 2px #f2d060, 1px 1px 2px #222;
}
.frame {
    background: #a08c59;
    border: 3px double #54451d;
    box-shadow: 0 0 0 1px #e6d28d;
}
.cream {
    background: #f0e9c0;
    border: 1px solid #a49250;
    box-shadow: 0 0 0 2px #eee7bb, 0 0 2px 3px #776;
}
.copper {
    background: #6e4023;
    border: 3px double #d99c6d;
    box-shadow: 0 0 0 1px #211006, 2px 2px 3px #222;
}
.styles-foot {
    display: flex;
    align-items: center;
    justify-content: flex-end;
    gap: 18px;
    height: 19px;
    border-top: 1px solid #686868;
}
.styles-foot .sizer {
    margin-left: -1px;
}
.layers {
    flex: 1;
    min-height: 0;
    display: flex;
    flex-direction: column;
    border-bottom: 0;
}
.filter-row, .field-row {
    display: flex;
    align-items: center;
    flex: none;
    height: 29px;
    padding: 0 6px 0 4px;
    border-bottom: 1px solid #686868;
}
.filter-row {
    height: 27px;
    gap: 12px;
    padding-right: 5px;
}
.filter-row .first {
    margin-left: 1px;
}
.filter {
    width: 83px;
    padding-left: 6px;
}
.filter select {
    padding-left: 3px;
}
.t-filter {
    width: 12px;
    color: #999;
    font: bold 15px/16px "Liberation Serif", serif;
    text-align: center;
}
.switch {
    width: 9px;
    height: 17px;
    margin-left: auto;
    border: 1px solid #333;
    background: linear-gradient(#757575 50%, #3d3d3d 50%);
}
.blend {
    width: 111px;
}
.push {
    margin-left: auto;
    width: 55px;
}
.field-row .push[for="fill"] {
    width: 31px;
}
.combo {
    display: flex;
    width: 56px;
    height: 20px;
    border: 1px solid #2c2c2c;
}
.combo input {
    width: 36px;
    padding-left: 4px;
    background: #3a3a3a;
    font-size: 11px;
    color: #fff;
}
.combo button {
    flex: 1;
    background: linear-gradient(#6d6d6d, #595959);
}
.combo button::after {
    content: "";
    display: block;
    width: 0;
    margin: 0 auto;
    border: 3px solid transparent;
    border-top-color: #ddd;
    border-bottom: 0;
}
.lock-label {
    width: 33px;
    margin-left: 2px;
    color: #aaa;
}
.locks {
    display: flex;
    align-items: center;
    gap: 8px;
    margin-left: 4px;
}
.layer-list {
    flex: 1;
    min-height: 0;
    padding-right: 15px;
    background: linear-gradient(90deg, #444 225px, #393939 225px, #464646);
}
.layer {
    display: flex;
    align-items: center;
    height: 32px;
    background: #535353;
    border-bottom: 1px solid #393939;
}
.layer.active {
    background: linear-gradient(90deg, #535353 30px, #6b7c93 30px);
}
.eye {
    width: 31px;
    height: 31px;
    display: grid;
    place-items: center;
    border-right: 1px solid #393939;
}
.thumb {
    width: 32px;
    height: 26px;
    margin-left: 3px;
    border: 1px solid #000;
    background: #fff;
}
.thumb.checker {
    background: repeating-conic-gradient(#fff 0 25%, #ccc 0 50%) 0 0 / 8px 8px;
    outline: 1px solid #fff;
    outline-offset: 1px;
}
.name {
    margin-left: 9px;
    color: #fff;
}
.name.italic {
    margin-left: 11px;
    font-style: italic;
}
.locked {
    margin-left: auto;
    margin-right: 17px;
}
.layers-foot {
    display: flex;
    align-items: center;
    justify-content: flex-end;
    gap: 15px;
    flex: none;
    height: 19px;
    padding-right: 28px;
    border-top: 1px solid #303030;
}
.layers-foot .wide {
    margin: 0 -1px;
}
.fx {
    width: 12px;
    color: #999;
    font: italic 14px/14px "Liberation Serif", serif;
}

/* Taskbar */
.taskbar {
    display: flex;
    align-items: center;
    flex: none;
    height: 40px;
    padding-left: 8px;
    border-top: 1px solid #ccc;
    background:
        radial-gradient(ellipse 150px 40px at 450px 20px, #8c929d, transparent),
        radial-gradient(ellipse 90px 30px at 1200px 5px, #456a91, transparent),
        radial-gradient(ellipse 90px 26px at 1320px 30px, #496887, transparent),
        linear-gradient(90deg, #8d8d8d, #b5b5b5 240px, #a2a4a9 600px, #b6b6b6 900px, #b0b2b5 960px, #70757d 1010px, #7c7e82 1090px, #6c7887 1250px, #616a75);
}
.orb {
    width: 38px;
    height: 38px;
    display: grid;
    place-items: center;
    border-radius: 50%;
    background: radial-gradient(at 50% 95%, #51d4ef, #155a91 55%, #8ba7bd 85%);
    border: 1px solid #35495a;
}
.dots {
    width: 8px;
    height: 30px;
    margin-left: 12px;
    background: repeating-linear-gradient(#3b3b3b 0 2px, transparent 2px 4px);
    -webkit-mask: repeating-linear-gradient(90deg, #000 0 2px, transparent 2px 3px);
}
.task {
    width: 58px;
    height: 38px;
    margin-left: 10px;
    display: grid;
    place-items: center;
    border: 1px solid #5a5a5a;
    border-radius: 2px;
    background: linear-gradient(110deg, #c6c6c6, #a9a9a9 50%, #c9c9c9);
    box-shadow: inset 0 0 0 1px #ddd;
}
.task.active {
    margin-left: 4px;
    background: linear-gradient(110deg, #b8b8b8, #e3e3e3 60%, #ededed);
}
.ps-tile {
    width: 28px;
    height: 28px;
    border: 2px solid #42b4de;
    background: #121d33;
    color: #5ccbf3;
    font: bold 15px/24px "Open Sans", sans-serif;
    text-align: center;
}
.tray {
    display: flex;
    align-items: center;
    align-self: stretch;
    margin-left: auto;
    color: #fff;
}
.tray .dots {
    margin-left: 0;
}
.desk {
    margin-left: 6px;
}
.more {
    width: 18px;
    margin: -18px 0 0 7px;
    font-size: 17px;
}
.lang {
    width: 14px;
    margin-left: 9px;
    font: 12px/16px "Liberation Mono", monospace;
}
.sogou-mini {
    margin-left: 8px;
}
.help {
    margin-left: 7px;
}
.ime {
    margin-left: 9px;
}
.tray-icons {
    display: flex;
    align-items: center;
    gap: 8px;
    margin-left: 33px;
}
.clock {
    width: 54px;
    margin-left: 17px;
    display: flex;
    flex-direction: column;
    text-align: center;
    line-height: 18px;
}
.show-desktop {
    width: 15px;
    margin-left: 11px;
    align-self: stretch;
    border: 1px solid #333;
    background: linear-gradient(120deg, #b2b6bb, #646d76);
    box-shadow: inset 0 0 0 1px #aaa;
}

/* Floating widgets */
.speed {
    position: absolute;
    right: 74px;
    bottom: 147px;
    display: flex;
    align-items: center;
    width: 102px;
    height: 38px;
    border-radius: 0 19px 19px 0;
    background: linear-gradient(#f5f5f5, #d9d9d9);
    box-shadow: 0 2px 5px rgba(0, 0, 0, 0.5);
    color: #111;
}
.ball {
    flex: none;
    width: 48px;
    height: 48px;
    margin-left: -24px;
    padding-right: 2px;
    border: 2px solid #eee;
    border-radius: 50%;
    background: linear-gradient(#1e7958 26%, #56ca67 26%, #45c35b);
    box-shadow: inset 0 0 0 1px #2d8c53, 0 2px 4px rgba(0, 0, 0, 0.6);
    color: #fff;
    font: 14px/42px "Liberation Sans", sans-serif;
    text-align: center;
}
.rates {
    width: 46px;
    margin-left: 4px;
    font-size: 10px;
    line-height: 15px;
}
.rates span {
    display: flex;
    align-items: center;
    justify-content: space-between;
}
.boost {
    margin-left: 4px;
    margin-top: -4px;
}
.ime-bar {
    position: absolute;
    right: 0;
    bottom: 90px;
    display: flex;
    align-items: center;
    gap: 8px;
    height: 24px;
    padding-right: 5px;
    background: #fbfdff;
}
.sogou {
    margin: -2px -4px 0 -4px;
}
.user {
    margin-right: -3px;
}
.ying {
    width: 16px;
    color: #1f6fc4;
    font-size: 15px;
    font-weight: bold;
}
.alert {
    position: absolute;
    top: -3px;
    right: 0;
    width: 8px;
    height: 8px;
    border-radius: 50%;
    background: #ef3b15;
}
```
